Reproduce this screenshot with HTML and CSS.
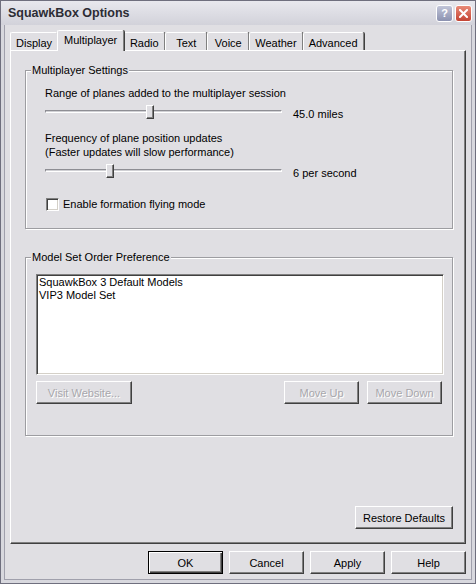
FILE: index.html
```html
<!DOCTYPE html>
<html>
<head>
<meta charset="utf-8">
<link rel="stylesheet" href="styles.css">
</head>
<body>
<div class="window">
  <div class="titlebar">
    <span class="title">SquawkBox Options</span>
    <div class="caption-btns">
      <span class="cbtn help">?</span>
      <span class="cbtn close"><svg width="9" height="9" viewBox="0 0 9 9"><path d="M1 1L8 8M8 1L1 8" stroke="#fff" stroke-width="2" stroke-linecap="square"/></svg></span>
    </div>
  </div>
  <div class="client">
    <div class="tabs">
      <div class="tab">Display</div>
      <div class="tab active">Multiplayer</div>
      <div class="tab">Radio</div>
      <div class="tab">Text</div>
      <div class="tab">Voice</div>
      <div class="tab">Weather</div>
      <div class="tab">Advanced</div>
    </div>
    <div class="panel">
      <fieldset class="group group-mp">
        <legend>Multiplayer Settings</legend>
        <div class="label">Range of planes added to the multiplayer session</div>
        <div class="slider-row">
          <div class="slider"><div class="track"></div><div class="thumb" style="left:44.5%"></div></div>
          <span class="value">45.0 miles</span>
        </div>
        <div class="label label-gap">Frequency of plane position updates<br>(Faster updates will slow performance)</div>
        <div class="slider-row">
          <div class="slider"><div class="track"></div><div class="thumb" style="left:27.6%"></div></div>
          <span class="value">6 per second</span>
        </div>
        <div class="check-row">
          <span class="checkbox"></span>
          <span class="check-label">Enable formation flying mode</span>
        </div>
      </fieldset>
      <fieldset class="group group-models">
        <legend>Model Set Order Preference</legend>
        <div class="listbox">
          <div class="item">SquawkBox 3 Default Models</div>
          <div class="item">VIP3 Model Set</div>
        </div>
        <div class="btn-row">
          <button class="btn btn-visit" disabled>Visit Website...</button>
          <div class="btn-pair">
            <button class="btn" disabled>Move Up</button>
            <button class="btn" disabled>Move Down</button>
          </div>
        </div>
      </fieldset>
      <div class="restore-row">
        <button class="btn btn-restore">Restore Defaults</button>
      </div>
    </div>
    <div class="dlg-btns">
      <button class="btn btn-default">OK</button>
      <button class="btn">Cancel</button>
      <button class="btn">Apply</button>
      <button class="btn">Help</button>
    </div>
  </div>
</div>
</body>
</html>
```
FILE: styles.css
```css
* { box-sizing: border-box; }
html, body { margin: 0; padding: 0; }
body {
  width: 476px;
  height: 584px;
  background: #e0dfe3;
  font-family: "Liberation Sans", Arial, sans-serif;
  font-size: 11px;
  color: #000;
}
.window {
  width: 476px;
  height: 584px;
  border: 1px solid #6f6f7e;
  background: #e0dfe3;
  box-shadow: inset 0 0 0 3px #d8d8de, inset 0 0 0 4px #a0a0ac;
  display: flex;
  flex-direction: column;
}
.titlebar {
  height: 24px;
  flex: none;
  display: flex;
  align-items: center;
  justify-content: space-between;
  padding: 0 3px 0 7px;
  background: linear-gradient(#e8e8ee, #d2d2da);
}
.title {
  font-weight: bold;
  font-size: 12.5px;
  color: #2c2c34;
}
.caption-btns { display: flex; gap: 2px; }
.cbtn {
  width: 17px;
  height: 17px;
  border: 1px solid #fff;
  border-radius: 3px;
  display: flex;
  align-items: center;
  justify-content: center;
}
.cbtn.help {
  background: linear-gradient(#c0c4d8, #8c92b0);
  color: #fff;
  font-weight: bold;
  font-size: 11px;
}
.cbtn.close { background: linear-gradient(#e88a78, #c44434); }
.client {
  flex: 1;
  display: flex;
  flex-direction: column;
  padding: 5px 9px 9px 9px;
}
.tabs {
  display: flex;
  align-items: flex-end;
  height: 20px;
  flex: none;
}
.tab {
  height: 18px;
  min-width: 42px;
  padding: 2px 5px 0;
  display: flex;
  align-items: center;
  justify-content: center;
  background: #e0dfe3;
  border-top: 1px solid #fff;
  border-left: 1px solid #fff;
  border-right: 1px solid #808080;
  box-shadow: 1px 0 0 #404040;
  border-radius: 2px 2px 0 0;
  white-space: nowrap;
}
.tab.active {
  height: 21px;
  margin: 0 -1px -1px;
  padding: 0 6px 2px;
  position: relative;
  z-index: 1;
}
.panel {
  height: 494px;
  flex: none;
  border-top: 1px solid #fff;
  border-left: 1px solid #fff;
  border-right: 1px solid #404040;
  border-bottom: 1px solid #404040;
  box-shadow: inset -1px -1px 0 #808080;
  padding: 12px 12px 14px 14px;
  display: flex;
  flex-direction: column;
}
.group {
  margin: 0;
  min-width: 0;
  border: 1px solid #9d9da1;
  box-shadow: inset 1px 1px 0 #fff, 1px 1px 0 #fff;
}
.group legend {
  padding: 0 1px;
  line-height: 14px;
  background: #e0dfe3;
}
.group-mp { padding: 9px 14px 17px 19px; }
.group-mp legend { margin-left: -14px; }
.group-models {
  margin-top: 21px;
  padding: 10px 8px 31px 10px;
}
.group-models legend { margin-left: -5px; }
.label { line-height: 14px; }
.label-gap { margin-top: 9px; }
.slider-row { display: flex; height: 22px; }
.slider {
  position: relative;
  width: 237px;
  height: 22px;
  flex: none;
}
.track {
  margin-top: 10px;
  height: 3px;
  border-top: 1px solid #8e8e94;
  border-left: 1px solid #8e8e94;
  border-bottom: 1px solid #fff;
  border-right: 1px solid #fff;
  background: #d0d0d4;
}
.thumb {
  position: absolute;
  top: 5px;
  width: 8px;
  height: 14px;
  transform: translateX(-50%);
  background: #e0dfe3;
  border: 1px solid;
  border-color: #fff #404040 #404040 #fff;
  box-shadow: inset -1px -1px 0 #808080;
}
.value { margin-left: 11px; margin-top: 7px; line-height: 14px; }
.check-row {
  display: flex;
  align-items: center;
  gap: 4px;
  height: 14px;
  margin-top: 16px;
}
.checkbox {
  width: 13px;
  height: 13px;
  margin-left: 1px;
  background: #fff;
  border: 1px solid;
  border-color: #808080 #fff #fff #808080;
  box-shadow: inset 1px 1px 0 #404040, inset -1px -1px 0 #d4d0c8;
}
.listbox {
  height: 101px;
  background: #fff;
  border: 1px solid;
  border-color: #808080 #fff #fff #808080;
  box-shadow: inset 1px 1px 0 #404040, inset -1px -1px 0 #d4d0c8;
  padding: 1px 2px;
}
.item { line-height: 13px; }
.btn-row {
  display: flex;
  justify-content: space-between;
  margin-top: 6px;
  padding-right: 2px;
}
.btn-pair { display: flex; gap: 8px; }
.btn {
  height: 23px;
  width: 75px;
  padding: 0;
  font: inherit;
  color: #000;
  background: #e0dfe3;
  border: 1px solid;
  border-color: #fff #404040 #404040 #fff;
  box-shadow: inset -1px -1px 0 #808080;
  border-radius: 0;
}
.btn:disabled {
  color: #a8a7ac;
  text-shadow: 1px 1px 0 #fff;
}
.btn-visit { width: 96px; }
.btn-restore { width: 98px; }
.restore-row {
  margin-top: auto;
  display: flex;
  justify-content: flex-end;
}
.dlg-btns {
  display: flex;
  justify-content: flex-end;
  gap: 6px;
  margin-top: 7px;
}
.btn-default {
  border-color: #000;
  box-shadow: inset 1px 1px 0 #fff, inset -1px -1px 0 #404040, inset -2px -2px 0 #808080;
}
```
